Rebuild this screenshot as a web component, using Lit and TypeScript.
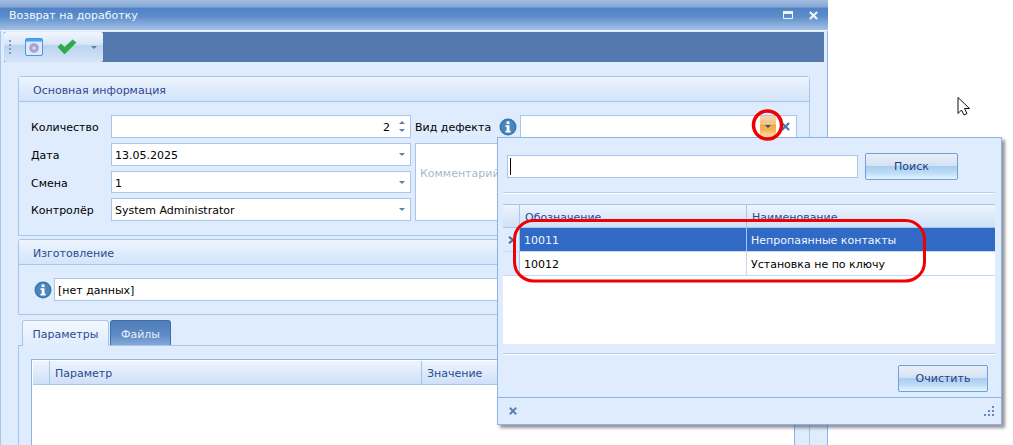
import { LitElement, html, css, svg } from "lit";
import { customElement } from "lit/decorators.js";

const info = html`<svg class="info" width="18" height="18" viewBox="0 0 18 18"><circle cx="9" cy="9" r="8.5" fill="#3a76ae"/><circle cx="9" cy="9" r="7" fill="#4a86bb"/><rect x="7.6" y="3.4" width="2.9" height="2.7" fill="#fff"/><path d="M6.5 7.3h4v5.4h1.2v1.7H6.5v-1.7h1.2V9H6.5z" fill="#fff"/></svg>`;
const arrow = html`<svg class="arrow" width="6" height="3" viewBox="0 0 6 3"><path d="M0 0h6L3 3z" fill="#5a7fb0"/></svg>`;
const cross = (c: string, s: number) => svg`<svg width="${s}" height="${s}" viewBox="0 0 10 10"><path d="M1 1l8 8M9 1l-8 8" stroke="${c}" stroke-width="2.400" fill="none"/></svg>`;

@customElement("app-root")
export class AppRoot extends LitElement {
  static styles = css`
    :host { display: block; position: relative; width: 1013px; height: 445px; overflow: hidden; background: #fff;
      font: 11px "DejaVu Sans", Tahoma, sans-serif; color: #000; }
    * { box-sizing: border-box; }
    .win { width: 828px; height: 445px; background: #dfecfd; border-right: 1px solid #8db2e3; border-left: 1px solid #a9c6ec; display: flex; flex-direction: column; }
    .title { height: 31px; flex: none; margin: 0 -1px; padding: 0 10px 0 9px; display: flex; align-items: center; gap: 16px; color: #f3f8ff;
      background: linear-gradient(#a3bde0 0, #86a8d6 7px, #4f83c5 8px, #5a8cca 16px, #a4c1e6 30px); border-bottom: 1px solid #f0f6fe; }
    .title span { flex: 1; }
    .tbwrap { margin: 1px 3px 0 3px; height: 30px; flex: none; background: #5479ae; }
    .tb { width: 99px; height: 30px; border-radius: 2px; display: flex; align-items: center; padding-left: 5px; background: linear-gradient(#f1f6fe 0, #d9e6f8 12px, #bcd3ef 14px, #d5e5f9 100%); }
    .grip { width: 2px; height: 14px; background: repeating-linear-gradient(#7f9cc4 0 2px, transparent 2px 4px); margin-right: 14px; }
    .tbicons { display: flex; align-items: center; }
    .body { padding: 14px 17px 0 17px; display: flex; flex-direction: column; flex: 1; min-height: 0; }
    .group { border: 1px solid #a8c6ec; border-radius: 3px 3px 0 0; background: #dfecfd; flex: none; }
    .ghead { height: 25px; padding: 2px 0 0 14px; display: flex; align-items: center; color: #2c4a92; background: linear-gradient(#edf4fe, #d4e4f9); border-bottom: 1px solid #a8c6ec; }
    .g1 { height: 160px; }
    .g2 { height: 76px; margin-top: 3px; }
    .form { display: grid; grid-template-columns: 80px 300px 1fr; padding: 13px 12px 0 12px; }
    .lcol { display: grid; grid-template-columns: 80px 300px; grid-template-rows: 23px 23px 22px 23px; row-gap: 5px; grid-column: 1 / 3; }
    .lcol label { display: flex; align-items: center; padding-top: 2px; }
    .inp { background: #fff; border: 1px solid #a8c6ec; display: flex; align-items: center; padding: 0 5px 0 3px; justify-content: space-between; min-width: 0; }
    .inp > span.t { padding-top: 2px; }
    .rcol { padding-left: 4px; display: flex; flex-direction: column; gap: 5px; }
    .rtop { display: flex; align-items: center; height: 23px; }
    .rtop label { width: 84px; padding-top: 2px; }
    .rtop .info { margin-right: 3px; flex: none; }
    .rtop .inp { flex: 1; height: 23px; padding-right: 6px; justify-content: flex-end; gap: 5px; }
    .ddbtn { width: 16px; height: 21px; display: flex; align-items: flex-end; justify-content: center; padding-bottom: 9px; background: linear-gradient(#f9d3a6 0, #f8cf9c 4px, #f6c38c 5px, #f7c88f 8px, #f2a83a 9px, #f5b554 14px, #fde0a0 21px); }
    .ddbtn path { fill: #2a4f9e; }
    .comment { height: 78px; background: #fff; border: 1px solid #a8c6ec; padding: 23px 4px; color: #a9b9cc; }
    .spin { display: flex; flex-direction: column; gap: 5px; }
    .up { transform: rotate(180deg); display: flex; }
    .num { flex: 1; text-align: right; padding-right: 9px; }
    .g2row { display: flex; align-items: center; gap: 2px; padding: 13px 12px 0 15px; }
    .g2row .inp { flex: 1; height: 23px; }
    .tabs { display: flex; padding-left: 4px; height: 30px; align-items: flex-end; gap: 1px; flex: none; }
    .tab { height: 25px; padding-top: 2px; display: flex; align-items: center; justify-content: center; border-radius: 3px 3px 0 0; }
    .tab.on { width: 87px; color: #2c4a92; background: linear-gradient(#f4f8fe, #dfecfd); border: 1px solid #a8c6ec; border-bottom: none; position: relative; top: 1px; height: 26px; }
    .tab.off { width: 61px; color: #e6eefa; background: linear-gradient(#4f7db8 0, #5f8cc6 60%, #86a9d8 100%); border: 1px solid #3f6ea9; border-bottom: none; }
    .panel { flex: 1; border: 1px solid #a8c6ec; border-bottom: none; padding: 13px 14px 0 12px; }
    .grid { border: 1px solid #8db2e3; border-bottom: none; background: #fff; padding: 1px 1px 0 1px; height: 100%; }
    .ghdr { display: flex; height: 24px; background: linear-gradient(#edf4fe, #cfe0f7); border-bottom: 1px solid #a8c6ec; color: #2c4a92; }
    .ghdr div { display: flex; align-items: center; padding: 2px 0 0 5px; border-right: 1px solid #a8c6ec; }
    .ghdr .ind { width: 17px; padding: 0; flex: none; }
    .ghdr .rest, .row .rest { flex: 1; border: none; }
    .pcol { width: 372px; flex: none; }
    .popup { position: absolute; left: 497px; top: 137px; width: 505px; height: 288px; background: #dfecfd; border: 1px solid #8db2e3; box-shadow: 3px 3px 3px rgba(60,60,70,.55); display: flex; flex-direction: column; padding: 1px; }
    .psearch { display: flex; align-items: center; gap: 7px; padding: 11px 0 0 8px; height: 44px; flex: none; }
    .psearch .inp { width: 351px; height: 23px; justify-content: flex-start; padding: 0 2px; }
    .caret { width: 1px; height: 17px; background: #000; }
    .btn { display: flex; align-items: center; justify-content: center; border: 1px solid #6f9fdc; border-radius: 2px; color: #1f3f7f; background: linear-gradient(#e9eff9 0, #d5e2f4 46%, #a8cdf0 48%, #bcdcf6 75%, #e2f4fe 100%); }
    .search { width: 93px; height: 27px; }
    .sep { height: 2px; flex: none; margin: 9px 5px 0 4px; background: linear-gradient(#bccbe6 1px, #fff 1px); }
    .pgrid { margin: 10px 5px 0 4px; height: 140px; flex: none; background: #fff; display: flex; flex-direction: column; }
    .pgrid .ghdr { height: 24px; border-top: 1px solid #a8c6ec; }
    .pc1 { width: 227px; flex: none; }
    .row { display: flex; height: 24px; background: #fff; border-bottom: 1px solid #c6d9f3; }
    .row div { display: flex; align-items: center; padding: 2px 0 0 4px; border-right: 1px solid #c6d9f3; }
    .row .ind { width: 17px; padding: 0; background: #dfecfd; border-right: 1px solid #a8c6ec; justify-content: center; flex: none; }
    .row.sel { background: #316ac5; color: #f2f6fd; }
    .row.sel .pc1 { border-right-color: #a8c6ec; }
    .pfoot { flex: 1; display: flex; justify-content: flex-end; align-items: flex-start; padding: 10px 12px 0 0; }
    .clear { width: 90px; height: 27px; }
    .status { height: 27px; flex: none; margin: 0 -1px -1px; border-top: 1px solid #8db2e3; display: flex; align-items: center; justify-content: space-between; padding: 0 6px 0 11px; }
    .mark { position: absolute; left: 0; top: 0; pointer-events: none; }
    .check { margin-left: 14px; }
    .tbarrow { margin-left: 14px; display: flex; }
  `;

  render() {
    return html`
      <div class="win">
        <div class="title"><span>Возврат на доработку</span>
          <svg width="10" height="8" viewBox="0 0 10 8"><path d="M.5.5h9v7h-9z" fill="none" stroke="#f0f5fc"/><rect x="0" y="0" width="10" height="3" fill="#f0f5fc"/></svg>
          ${cross("#f0f5fc", 9)}
        </div>
        <div class="tbwrap"><div class="tb">
          <div class="grip"></div>
          <div class="tbicons">
            <svg width="18" height="18" viewBox="0 0 18 18"><rect x=".5" y=".5" width="17" height="17" rx="1.500" fill="#dfe8f8" stroke="#3d9bf0"/><rect x="1" y="1" width="16" height="2.500" fill="#4aa3f2"/><circle cx="9" cy="10" r="4.800" fill="#a5a3cf"/><circle cx="9" cy="10" r="1.800" fill="#d8d6ea"/></svg>
            <svg class="check" width="20" height="16" viewBox="0 0 20 16"><path d="M1 8l3-3 3.500 3.500L15.500 1 19 3.500 7.500 15z" fill="#2bb03d" stroke="#1f8f30" stroke-width=".6"/></svg>
            <span class="tbarrow">${arrow}</span>
          </div>
        </div></div>
        <div class="body">
          <div class="group g1">
            <div class="ghead">Основная информация</div>
            <div class="form">
              <div class="lcol">
                <label>Количество</label><div class="inp"><span class="num t">2</span><span class="spin"><span class="up">${arrow}</span>${arrow}</span></div>
                <label>Дата</label><div class="inp"><span class="t">13.05.2025</span>${arrow}</div>
                <label>Смена</label><div class="inp"><span class="t">1</span>${arrow}</div>
                <label>Контролёр</label><div class="inp"><span class="t">System Administrator</span>${arrow}</div>
              </div>
              <div class="rcol">
                <div class="rtop"><label>Вид дефекта</label>${info}
                  <div class="inp"><div class="ddbtn">${arrow}</div>${cross("#3f78b8", 9)}</div></div>
                <div class="comment">Комментарий</div>
              </div>
            </div>
          </div>
          <div class="group g2">
            <div class="ghead">Изготовление</div>
            <div class="g2row">${info}<div class="inp"><span class="t">[нет данных]</span></div></div>
          </div>
          <div class="tabs"><div class="tab on">Параметры</div><div class="tab off">Файлы</div></div>
          <div class="panel"><div class="grid"><div class="ghdr"><div class="ind"></div><div class="pcol">Параметр</div><div class="rest">Значение</div></div></div></div>
        </div>
      </div>

      <div class="popup">
        <div class="psearch"><div class="inp"><div class="caret"></div></div><div class="btn search">Поиск</div></div>
        <div class="sep"></div>
        <div class="pgrid">
          <div class="ghdr"><div class="ind"></div><div class="pc1">Обозначение</div><div class="rest">Наименование</div></div>
          <div class="row sel"><div class="ind"><svg width="7" height="8" viewBox="0 0 7 8"><path d="M1 .8L5 4 1 7.200" fill="none" stroke="#44689a" stroke-width="2"/></svg></div><div class="pc1">10011</div><div class="rest">Непропаянные контакты</div></div>
          <div class="row"><div class="ind"></div><div class="pc1">10012</div><div class="rest">Установка не по ключу</div></div>
        </div>
        <div class="sep"></div>
        <div class="pfoot"><div class="btn clear">Очистить</div></div>
        <div class="status">${cross("#5a7fb4", 8)}
          <svg width="11" height="10" viewBox="0 0 11 10" fill="#5f88bd"><rect x="8" y="0" width="2" height="2"/><rect x="4" y="4" width="2" height="2"/><rect x="8" y="4" width="2" height="2"/><rect x="0" y="8" width="2" height="2"/><rect x="4" y="8" width="2" height="2"/><rect x="8" y="8" width="2" height="2"/></svg>
        </div>
      </div>

      <svg class="mark" width="1013" height="445" viewBox="0 0 1013 445">
        <circle cx="767.500" cy="125" r="14" fill="none" stroke="#f00000" stroke-width="3.500"/>
        <rect x="514.500" y="220.500" width="410" height="60.500" rx="19" fill="none" stroke="#f00000" stroke-width="3"/>
        <path d="M958 97.500v16l3.500-3.500 2.500 5 3-1.500-2.500-5h5z" fill="#fff" stroke="#111" stroke-width="1"/>
      </svg>
    `;
  }
}
